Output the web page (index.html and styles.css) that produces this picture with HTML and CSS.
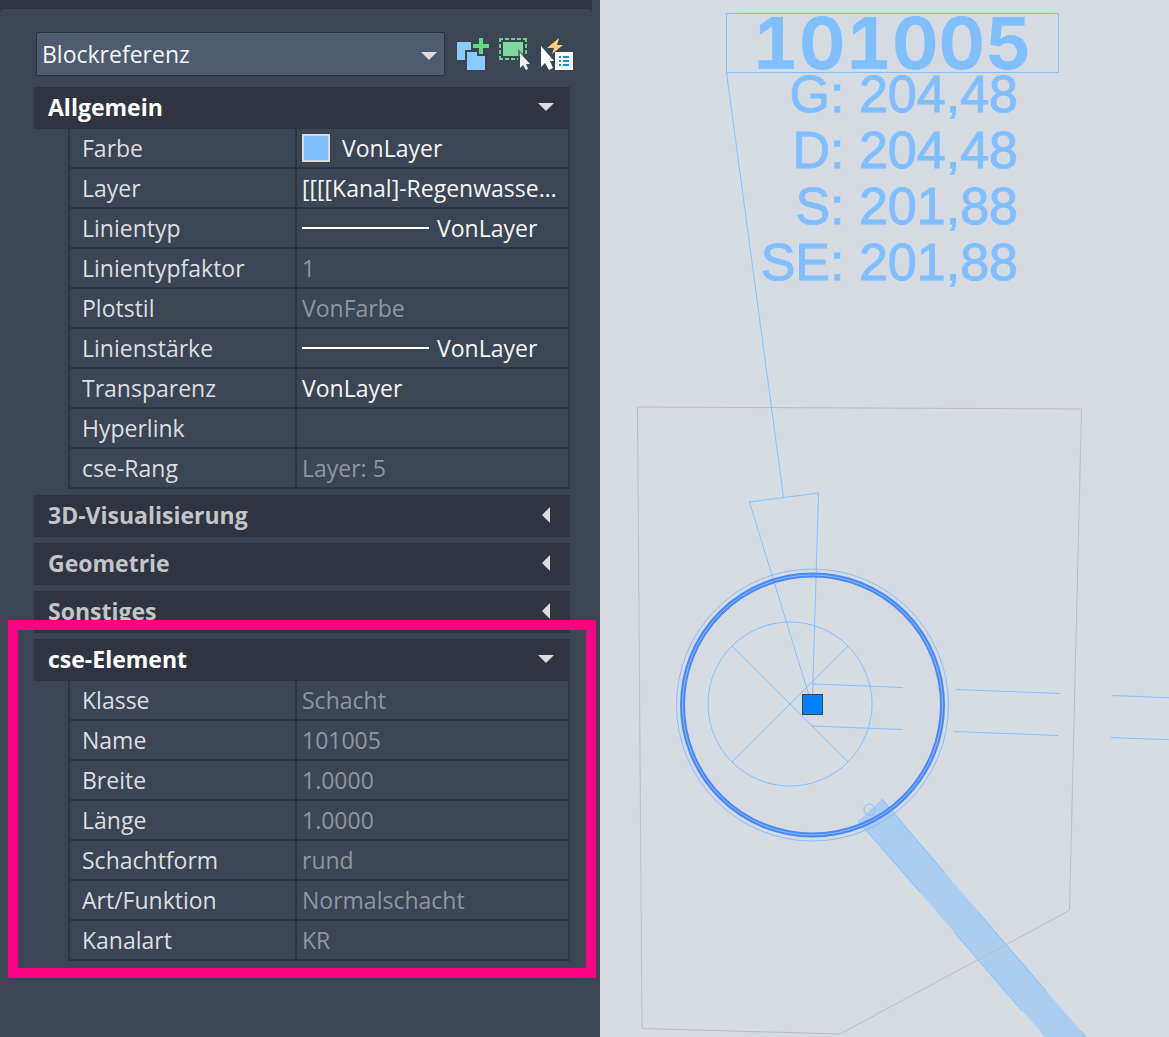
FILE: index.html
```html
<!DOCTYPE html>
<html lang="de">
<head>
<meta charset="utf-8">
<meta name="viewport" content="width=device-width, initial-scale=1">
<title>Eigenschaften – Blockreferenz</title>
<link rel="stylesheet" href="styles.css">
</head>
<body>
<div class="workspace">
  <aside class="palette" aria-label="Eigenschaften">
    <div class="palette-body">
      <div class="toolbar">
        <div class="type-picker">
          <select class="type-select" aria-label="Objekttyp">
            <option>Blockreferenz</option>
          </select>
          <svg class="type-arrow" width="16" height="8" viewBox="0 0 16 8" aria-hidden="true"><path d="M0 0h16L8 8z" fill="#dcdcdc"/></svg>
        </div>
        <button class="tool" type="button" aria-label="PICKADD umschalten">
          <svg width="32" height="32" viewBox="0 0 32 32" aria-hidden="true">
            <path d="M0 4h14v8H8v10H0z" fill="#8bcaff"/>
            <path d="M10 14h10v4h8v14H10z" fill="#8bcaff"/>
            <path d="M22 0h4v6h6v4h-6v6h-4v-6h-6V6h6z" fill="#5fdc82"/>
          </svg>
        </button>
        <button class="tool" type="button" aria-label="Objekte wählen">
          <svg width="32" height="32" viewBox="0 0 32 32" aria-hidden="true">
            <path d="M0 4V0h4v2H2v2zM6 0h4v2H6zM12 0h4v2h-4zM18 0h4v2h-4zM24 0h4v4h-2V2h-2zM26 6h2v4h-2zM26 12h2v4h-2zM0 6h2v4H0zM0 12h2v4H0zM0 18h2v2h2v2H0zM6 20h4v2H6zM12 20h4v2h-4zM18 20h1v2h-1z" fill="#5fdc82"/>
            <path d="M4 4h20v14h-3l-2-7v7H4z" fill="#82d9a0"/>
            <path d="M19 11l5 5v2h-5z" fill="#4c8068"/>
            <path d="M21 15v15l3-3 3 5 2-1-2-5h4z" fill="#f0f0f2"/>
          </svg>
        </button>
        <button class="tool" type="button" aria-label="Schnellauswahl">
          <svg width="32" height="32" viewBox="0 0 32 32" aria-hidden="true">
            <path d="M18 0L6 10h7l-2 6L22 7h-6z" fill="#ffd078"/>
            <path d="M0 8v21l4-4 4 7 4-2-3-7h4z" fill="#fff"/>
            <path d="M14 14h18v18H14z" fill="#f7f7f7"/>
            <path d="M18 18h2v2h-2zM22 18h6v2h-6zM18 22h2v2h-2zM22 22h6v2h-6zM18 26h2v2h-2zM22 26h6v2h-6z" fill="#1e88e5"/>
          </svg>
        </button>
      </div>

      <section class="group">
        <h2 class="group-title"><button class="group-toggle is-open" type="button" aria-expanded="true">Allgemein</button></h2>
        <table class="props">
          <tr><th scope="row">Farbe</th><td><span class="value"><span class="swatch"></span>VonLayer</span></td></tr>
          <tr><th scope="row">Layer</th><td>[[[[Kanal]-Regenwasse…</td></tr>
          <tr><th scope="row">Linientyp</th><td><span class="value"><span class="line-sample"></span>VonLayer</span></td></tr>
          <tr><th scope="row">Linientypfaktor</th><td class="locked">1</td></tr>
          <tr><th scope="row">Plotstil</th><td class="locked">VonFarbe</td></tr>
          <tr><th scope="row">Linienstärke</th><td><span class="value"><span class="line-sample"></span>VonLayer</span></td></tr>
          <tr><th scope="row">Transparenz</th><td>VonLayer</td></tr>
          <tr><th scope="row">Hyperlink</th><td></td></tr>
          <tr><th scope="row">cse-Rang</th><td class="locked">Layer: 5</td></tr>
        </table>
      </section>

      <section class="group">
        <h2 class="group-title"><button class="group-toggle" type="button" aria-expanded="false">3D-Visualisierung</button></h2>
      </section>
      <section class="group">
        <h2 class="group-title"><button class="group-toggle" type="button" aria-expanded="false">Geometrie</button></h2>
      </section>
      <section class="group">
        <h2 class="group-title"><button class="group-toggle" type="button" aria-expanded="false">Sonstiges</button></h2>
      </section>

      <section class="group marked">
        <h2 class="group-title"><button class="group-toggle is-open" type="button" aria-expanded="true">cse-Element</button></h2>
        <table class="props">
          <tr><th scope="row">Klasse</th><td class="locked">Schacht</td></tr>
          <tr><th scope="row">Name</th><td class="locked">101005</td></tr>
          <tr><th scope="row">Breite</th><td class="locked">1.0000</td></tr>
          <tr><th scope="row">Länge</th><td class="locked">1.0000</td></tr>
          <tr><th scope="row">Schachtform</th><td class="locked">rund</td></tr>
          <tr><th scope="row">Art/Funktion</th><td class="locked">Normalschacht</td></tr>
          <tr><th scope="row">Kanalart</th><td class="locked">KR</td></tr>
        </table>
      </section>
    </div>
  </aside>

  <main class="drawing">
    <svg class="plan" viewBox="0 0 569 1037" preserveAspectRatio="xMinYMin slice" role="img" aria-label="Lageplan Schacht 101005">
      <!-- pipe -->
      <path class="pipe" d="M282 799L258 821L445 1037H486z"/>
      <path class="thin" d="M282 799L344 872M378 912L446 991M481 1031L486 1037M258 821L320 892M354 932L422 1011"/>
      <circle class="thin" cx="269.500" cy="809.500" r="5.500"/>
      <!-- plot boundary -->
      <path class="boundary" d="M37.500 407L481.500 409L469.500 910.500L240 1034L42 1028.500z"/>
      <!-- label frame and leader -->
      <path class="thin" d="M126.500 13.500H458.500V72.500H126.500zM126.500 72.500L183.500 497"/>
      <path class="thin" d="M209.500 697L149.500 502L218.500 493L212.500 697"/>
      <!-- manhole cover -->
      <circle class="thin" cx="190" cy="704" r="82"/>
      <path class="thin" d="M132 646L248 762M248 646L132 762"/>
      <circle class="thin" cx="212.500" cy="705" r="136"/>
      <circle class="ring" cx="212.500" cy="705" r="130"/>
      <circle class="thin" cx="212.500" cy="705" r="130"/>
      <!-- dashed pipe walls -->
      <path class="thin" d="M213 684L303 687.500M356 689.500L460 693.500M512 695.500L600 699M212 726L302 729.500M354 731.500L458 735.500M511 737.500L600 741"/>
      <rect class="grip" x="202.500" y="694.500" width="20" height="20"/>
      <!-- labels -->
      <text class="label-id" x="292" y="69">101005</text>
      <text class="label-level" x="418" y="112">G: 204,48</text>
      <text class="label-level" x="418" y="168">D: 204,48</text>
      <text class="label-level" x="418" y="224">S: 201,88</text>
      <text class="label-level" x="418" y="280">SE: 201,88</text>
    </svg>
  </main>
</div>
</body>
</html>
```
FILE: styles.css
```css
* {
  box-sizing: border-box;
}

body {
  margin: 0;
  background: #3c4553;
  font-family: "Open Sans", "Noto Sans", sans-serif;
  font-size: 23px;
  line-height: 32px;
  color: #f5f5f5;
}

button,
select {
  font: inherit;
  color: inherit;
}

.workspace {
  display: flex;
  min-height: 100vh;
}

/* Properties palette */
.palette {
  flex: 0 0 600px;
  padding-right: 8px;
  background: linear-gradient(#2f3440, #2f3440) 0 0 / calc(100% - 8px) 14px no-repeat #3c4553;
}

.palette-body {
  margin-top: 9px;
  padding: 23px 22px 24px 34px;
  border-radius: 5px 5px 0 0;
  background: #3c4553;
}

.toolbar {
  display: flex;
  align-items: center;
  gap: 10px;
  margin: 0 -3px 11px 2px;
}

.type-picker {
  position: relative;
  flex: 1;
  margin-right: 2px;
}

.type-select {
  display: block;
  width: 100%;
  height: 44px;
  padding: 0 32px 0 5px;
  border: 1px solid #2b303b;
  border-radius: 2px;
  background: #4f5b6e;
  appearance: none;
}

.type-arrow {
  position: absolute;
  top: 20px;
  right: 8px;
  pointer-events: none;
}

.tool {
  width: 32px;
  height: 32px;
  padding: 0;
  border: 0;
  background: none;
}

.tool svg {
  display: block;
}

.group {
  margin-bottom: 6px;
}

.group-title {
  margin: 0;
  font-size: 23px;
}

.group-toggle {
  display: flex;
  align-items: center;
  justify-content: space-between;
  width: 100%;
  height: 42px;
  padding: 0 20px 2px 14px;
  border: 0;
  background: #2f3440;
  color: #c3c5c9;
  font-weight: 700;
}

.group-toggle::after {
  content: "";
  width: 8px;
  height: 16px;
  background: #dcdcdc;
  clip-path: polygon(100% 0, 100% 100%, 0 50%);
}

.group-toggle.is-open {
  padding-right: 16px;
  color: #fff;
}

.group-toggle.is-open::after {
  width: 16px;
  height: 8px;
  clip-path: polygon(0 0, 100% 0, 50% 100%);
}

.props {
  width: calc(100% - 34px);
  margin-left: 34px;
  border-left: 2px solid #2f3440;
  border-spacing: 0;
  table-layout: fixed;
}

.props th,
.props td {
  height: 40px;
  padding: 0 5px;
  border-right: 2px solid #2f3440;
  border-bottom: 2px solid #2f3440;
  text-align: left;
  font-weight: 400;
  white-space: nowrap;
}

.props th {
  width: 227px;
  padding-left: 12px;
  color: #dcdee1;
}

.props .locked {
  color: #91969e;
}

.value {
  display: flex;
  align-items: center;
}

.swatch {
  width: 28px;
  height: 28px;
  margin-right: 12px;
  border: 2px solid #dcdcdc;
  background: #80bfff;
}

.line-sample {
  width: 127px;
  height: 2px;
  margin-right: 8px;
  background: #fff;
}

/* Callout frame around the highlighted group */
.marked {
  position: relative;
}

.marked::after {
  content: "";
  position: absolute;
  inset: -19px -26px -17px;
  border: 10px solid #ff0080;
  pointer-events: none;
}

/* Drawing area */
.drawing {
  flex: 1;
  display: flex;
  min-width: 0;
  background: #d6dbe2;
}

.plan {
  display: block;
  width: 100%;
}

.thin {
  fill: none;
  stroke: #80bfff;
}

.boundary {
  fill: none;
  stroke: #babcbe;
}

.pipe {
  fill: #abcdf0;
}

.ring {
  fill: none;
  stroke: #4c88fb;
  stroke-width: 5;
}

.grip {
  fill: #007fff;
  stroke: #40454d;
}

.label-id,
.label-level {
  fill: #80bfff;
}

.label-id {
  font-family: Inter, "Liberation Sans", sans-serif;
  font-size: 72px;
  font-weight: 700;
  font-variant-numeric: tabular-nums;
  text-anchor: middle;
}

.label-level {
  font-family: "Liberation Sans", Arial, sans-serif;
  font-size: 52px;
  stroke: #80bfff;
  text-anchor: end;
}
```
